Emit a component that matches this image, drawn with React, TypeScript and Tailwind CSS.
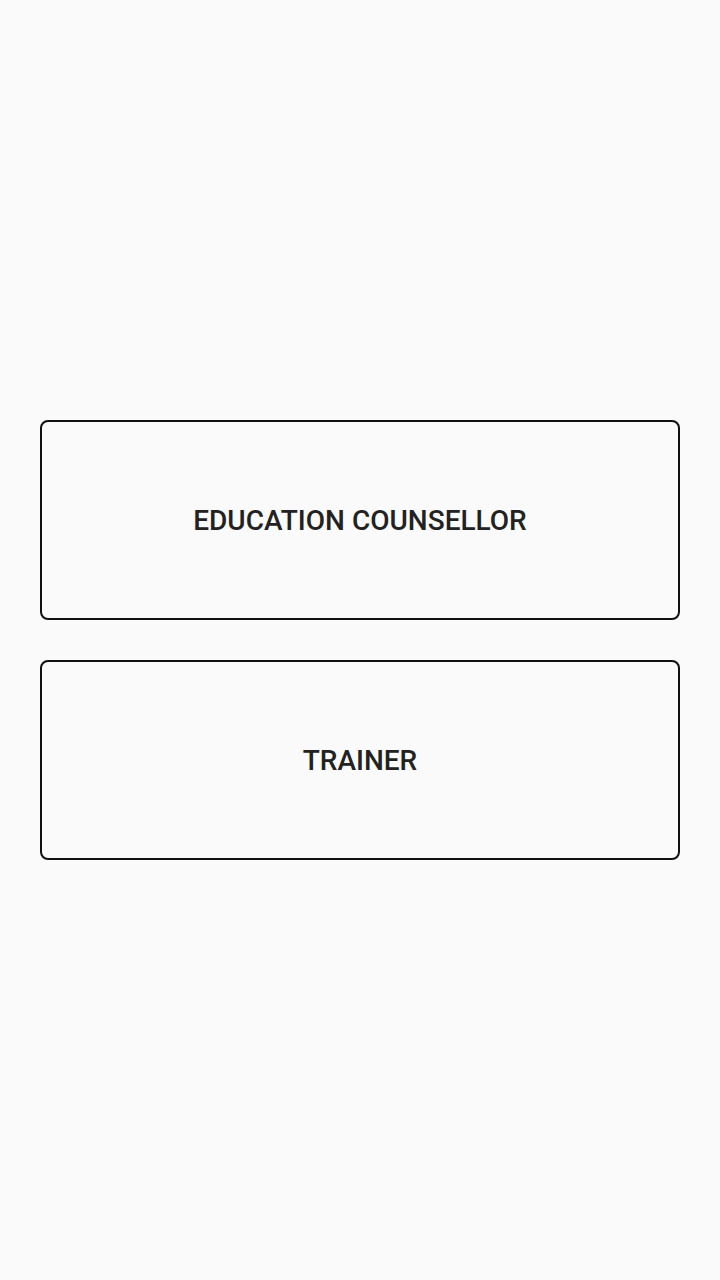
export default function App() {
  return (
    <div className="w-[720px] h-[1280px] bg-[#fafafa] flex flex-col justify-center px-10 gap-10" style={{ fontFamily: 'Roboto, "Noto Sans", sans-serif' }}>
      <div className="h-[200px] border-2 border-[#111111] rounded-[8px] flex items-center justify-center">
        <span className="text-[28px] leading-none font-medium text-[#222222] pt-[2px]">EDUCATION COUNSELLOR</span>
      </div>
      <div className="h-[200px] border-2 border-[#111111] rounded-[8px] flex items-center justify-center">
        <span className="text-[28px] leading-none font-medium text-[#222222] pt-[2px]">TRAINER</span>
      </div>
    </div>
  );
}
